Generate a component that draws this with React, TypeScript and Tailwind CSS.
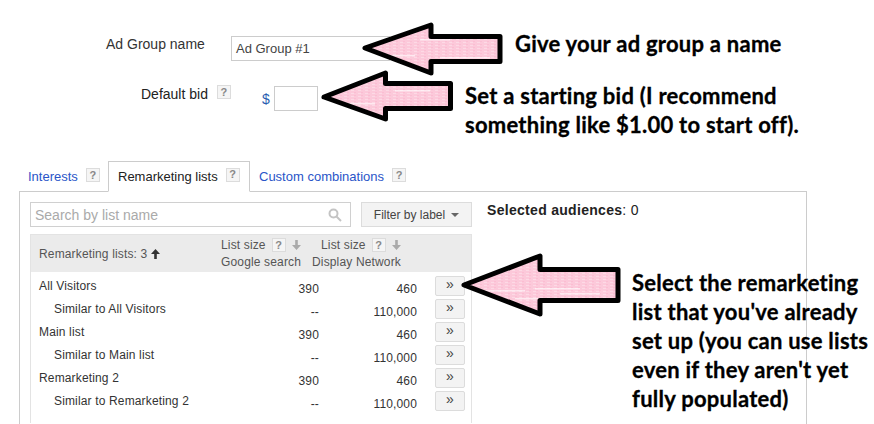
const Help = ({ className = '' }: { className?: string }) => (
  <span className={`inline-flex w-[14px] h-[14px] items-center justify-center border border-[#dcdcdc] bg-[#f5f5f5] text-[#888] text-[11px] font-bold leading-none ${className}`}>
    ?
  </span>
)

const DownArrow = ({ up = false, color = '#aaa' }: { up?: boolean; color?: string }) => (
  <svg width="9" height="10" viewBox="0 0 9 10" className={up ? 'rotate-180' : ''}>
    <path d="M3.2 0h2.6v5H9L4.5 10 0 5h3.2z" fill={color} />
  </svg>
)

const Arrow = ({ points, stripes }: { points: string; stripes: number[][] }) => (
  <svg className="absolute left-0 top-0" width="874" height="424" viewBox="0 0 874 424">
    <defs>
      <pattern id="speck" width="7" height="3" patternUnits="userSpaceOnUse">
        <rect width="7" height="3" fill="#fcc9da" />
        <rect x="1" y="0" width="3" height="1" fill="#fdd9e5" />
        <rect x="4" y="2" width="2" height="1" fill="#fbbdd2" />
      </pattern>
    </defs>
    <polygon points={points} fill="url(#speck)" />
    {stripes.map(([x, y, w], i) => (
      <rect key={i} x={x} y={y} width={w} height="1.5" fill="#fff" opacity="0.6" />
    ))}
    <polygon points={points} fill="none" stroke="#000" strokeWidth="5" strokeLinejoin="round" />
  </svg>
)

const rows = [
  { name: 'All Visitors', google: '390', display: '460' },
  { name: 'Similar to All Visitors', google: '--', display: '110,000', sub: true },
  { name: 'Main list', google: '390', display: '460' },
  { name: 'Similar to Main list', google: '--', display: '110,000', sub: true },
  { name: 'Remarketing 2', google: '390', display: '460' },
  { name: 'Similar to Remarketing 2', google: '--', display: '110,000', sub: true },
]

const note = "absolute font-['Lato',sans-serif] font-bold text-black text-[22px] leading-[29px] tracking-[0.25px] [-webkit-text-stroke:0.3px_#000] whitespace-nowrap"

export default function App() {
  return (
    <div className="relative w-[874px] h-[424px] overflow-hidden bg-white font-['Liberation_Sans',Arial,sans-serif] text-[12px] tracking-[0.15px] text-[#333]">
      {/* campaign form */}
      <div className="pt-[36px] h-[161px] tracking-normal">
        <div className="flex items-start h-[50px]">
          <span className="ml-[106px] w-[125px] text-[14px] leading-[16px]">Ad Group name</span>
          <div className="w-[159px] h-[25px] border border-[#ccc] pl-[4px] text-[13px] leading-[24px] text-[#444]">Ad Group #1</div>
        </div>
        <div className="flex items-start">
          <span className="ml-[141px] text-[14px] leading-[16px] text-[#222]">Default bid</span>
          <Help className="ml-[9px] mt-[-1px]" />
          <span className="ml-[31px] mt-[5px] text-[14px] leading-[16px] text-[#2a5db0]">$</span>
          <div className="ml-[4px] w-[44px] h-[25px] border border-[#ccc]" />
        </div>
      </div>

      {/* tabs */}
      <div className="flex items-end h-[31px] pl-[19px] relative z-10 mb-[-1px] text-[13px] tracking-normal">
        <div className="flex items-center w-[89px] h-[30px] pl-[9px] gap-[8px] text-[#2a55c8]">
          Interests <Help className="mt-[-4px]" />
        </div>
        <div className="flex items-center w-[142px] h-[31px] pl-[9px] gap-[8px] border border-[#ccc] border-b-white bg-white text-[#222]">
          Remarketing lists <Help className="mt-[-4px]" />
        </div>
        <div className="flex items-center h-[30px] pl-[9px] gap-[8px] text-[#2a55c8]">
          Custom combinations <Help className="mt-[-4px]" />
        </div>
      </div>

      {/* panel */}
      <div className="ml-[19px] w-[788px] h-[240px] border border-[#ccc] pt-[10px] pl-[10px]">
        <div className="flex items-start">
          <div className="w-[442px]">
            <div className="flex gap-[10px]">
              <div className="flex items-center justify-between w-[321px] h-[25px] border border-[#d0d0d0] pl-[4px] pr-[8px] pt-[1px] text-[14px] tracking-normal text-[#aaa]">
                Search by list name
                <svg width="14" height="14" viewBox="0 0 14 14" fill="none" stroke="#c4c4c4" strokeWidth="2">
                  <circle cx="5.5" cy="5.5" r="4" />
                  <path d="M8.5 8.5l4.5 4.5" />
                </svg>
              </div>
              <div className="flex items-center justify-center gap-[6px] w-[111px] h-[25px] border border-[#dcdcdc] bg-[#f3f3f3] text-[#444] tracking-normal">
                Filter by label
                <span className="w-0 h-0 border-x-[4px] border-x-transparent border-t-[4px] border-t-[#666]" />
              </div>
            </div>
            <div className="mt-[7px] border border-[#e3e3e3] border-b-0 h-[189px]">
              <div className="flex items-center h-[37px] bg-[#ebebeb] text-[#555]">
                <div className="flex items-center gap-[4px] w-[190px] pl-[8px]">
                  Remarketing lists: 3 <DownArrow up color="#333" />
                </div>
                <div className="w-[91px] leading-[17px]">
                  <div className="flex items-center gap-[6px]">List size <Help /> <DownArrow /></div>
                  <div>Google search</div>
                </div>
                <div className="w-[100px] leading-[17px]">
                  <div className="flex items-center gap-[6px] pl-[9px]">List size <Help /> <DownArrow /></div>
                  <div>Display Network</div>
                </div>
              </div>
              {rows.map((row) => (
                <div key={row.name} className="flex h-[23px] items-start">
                  <span className={`w-[190px] leading-[15px] pt-[7px] ${row.sub ? 'pl-[23px]' : 'pl-[8px]'}`}>{row.name}</span>
                  <span className="w-[98px] pt-[10px] leading-[15px] text-right">{row.google}</span>
                  <span className="w-[98px] pt-[10px] leading-[15px] text-right">{row.display}</span>
                  <button className="ml-[18px] mt-[4px] w-[30px] h-[20px] border border-[#dcdcdc] bg-[#f3f3f3] rounded-[2px] text-[14px] leading-[14px] pb-[4px] text-[#444]">»</button>
                </div>
              ))}
            </div>
          </div>
          <div className="ml-[15px] mt-[1px] text-[14px] leading-[15px] text-[#222] tracking-[0.3px]">
            <span className="font-bold">Selected audiences</span>: 0
          </div>
        </div>
      </div>

      {/* annotations drawn over the page */}
      <Arrow
        points="365,48 431,25 431,36.5 500,36.5 500,61.5 431,61.5 431,73"
        stripes={[[420, 39, 30], [440, 57, 50], [385, 55, 30]]}
      />
      <Arrow
        points="324,97 385.5,73 385.5,83.5 450.5,83.5 450.5,108.5 385.5,108.5 385.5,119"
        stripes={[[345, 103, 30], [395, 90, 35]]}
      />
      <Arrow
        points="464,285 540,256 540,269.5 618,269.5 618,300.5 540,300.5 540,314"
        stripes={[[485, 290, 40], [535, 288, 45], [515, 298, 30], [560, 293, 40]]}
      />
      <div className={`${note} left-[515px] top-[29px]`}>Give your ad group a name</div>
      <div className={`${note} left-[465px] top-[81px]`}>
        Set a starting bid (I recommend
        <br />
        something like $1.00 to start off).
      </div>
      <div className={`${note} left-[632px] top-[268px]`}>
        Select the remarketing
        <br />
        list that you've already
        <br />
        set up (you can use lists
        <br />
        even if they aren't yet
        <br />
        fully populated)
      </div>
    </div>
  )
}
